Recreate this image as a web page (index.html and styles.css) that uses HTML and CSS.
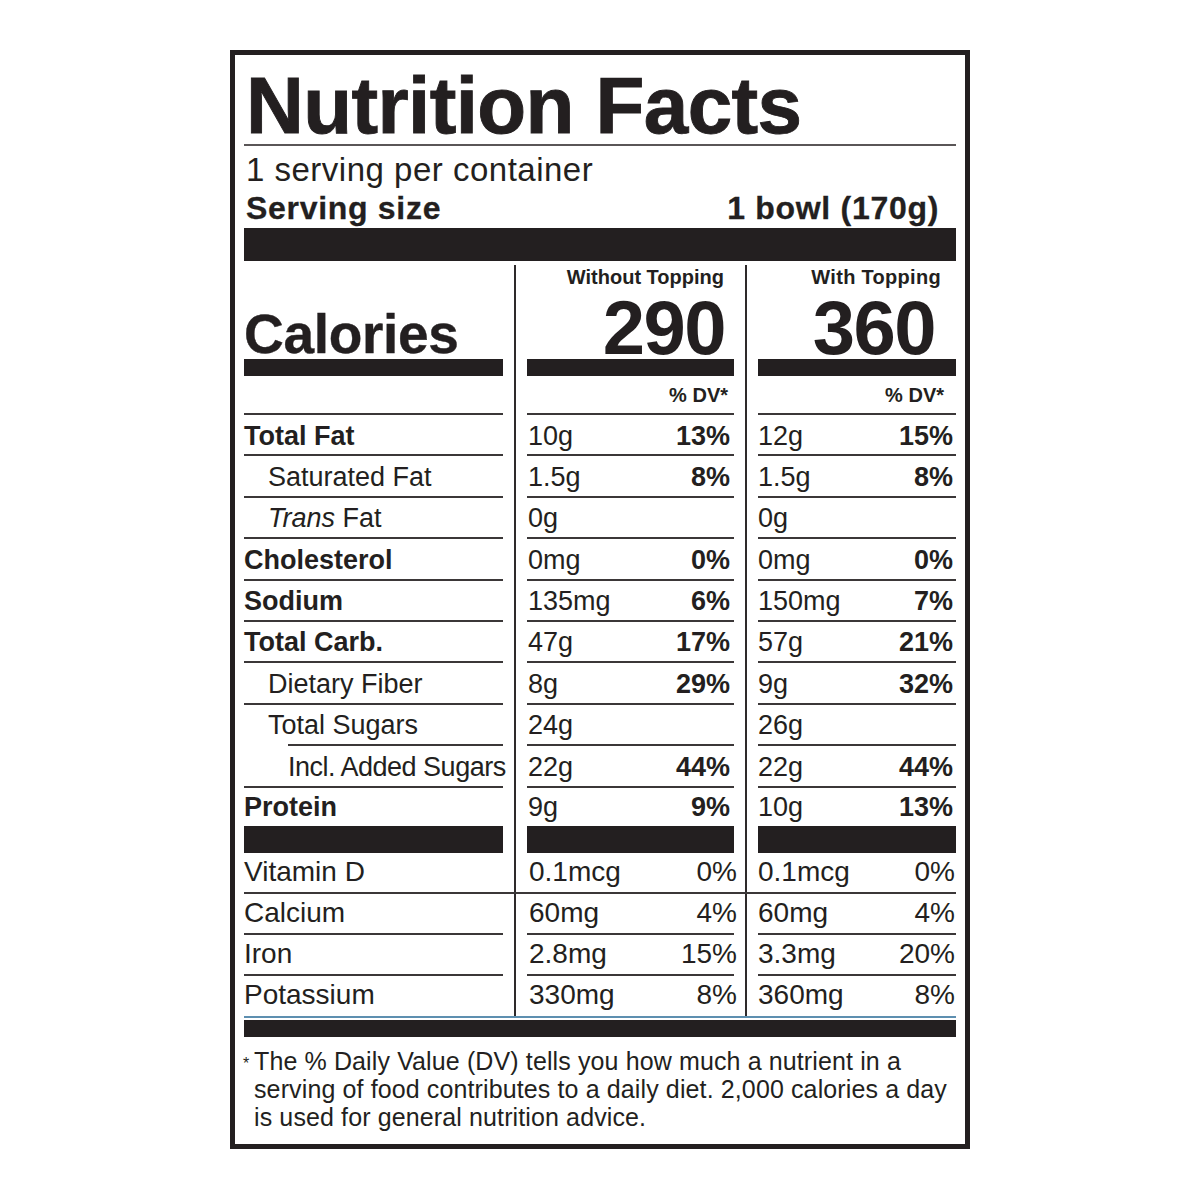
FILE: index.html
```html
<!DOCTYPE html>
<html lang="en">
<head>
<meta charset="utf-8">
<title>Nutrition Facts</title>
<link rel="stylesheet" href="styles.css">
</head>
<body>
<div class="label">
  <div class="title">Nutrition Facts</div>
  <div class="servings">1 serving per container</div>
  <div class="size"><span>Serving size</span><span>1 bowl (170g)</span></div>
  <div class="bigbar"></div>

  <div class="table">
    <div class="row cal">
      <div class="cc c1"><div class="cal-word">Calories</div><div class="cbar"></div></div>
      <div class="sep"></div>
      <div class="cc c2"><div class="cal-sub">Without Topping</div><div class="cal-num">290</div><div class="cbar"></div></div>
      <div class="sep"></div>
      <div class="cc c3"><div class="cal-sub">With Topping</div><div class="cal-num">360</div><div class="cbar"></div></div>
    </div>

    <div class="row dv">
      <div class="dc"></div>
      <div class="sep"></div>
      <div class="dc d2">% DV*</div>
      <div class="sep"></div>
      <div class="dc d3">% DV*</div>
    </div>

    <div class="row nr">
      <div class="cl b">Total Fat</div><div class="sep"></div>
      <div class="cv v2"><span>10g</span><b>13%</b></div><div class="sep"></div>
      <div class="cv v3"><span>12g</span><b>15%</b></div>
    </div>
    <div class="row nr">
      <div class="cl ind">Saturated Fat</div><div class="sep"></div>
      <div class="cv v2"><span>1.5g</span><b>8%</b></div><div class="sep"></div>
      <div class="cv v3"><span>1.5g</span><b>8%</b></div>
    </div>
    <div class="row nr">
      <div class="cl ind"><i>Trans</i> Fat</div><div class="sep"></div>
      <div class="cv v2"><span>0g</span></div><div class="sep"></div>
      <div class="cv v3"><span>0g</span></div>
    </div>
    <div class="row nr">
      <div class="cl b">Cholesterol</div><div class="sep"></div>
      <div class="cv v2"><span>0mg</span><b>0%</b></div><div class="sep"></div>
      <div class="cv v3"><span>0mg</span><b>0%</b></div>
    </div>
    <div class="row nr">
      <div class="cl b">Sodium</div><div class="sep"></div>
      <div class="cv v2"><span>135mg</span><b>6%</b></div><div class="sep"></div>
      <div class="cv v3"><span>150mg</span><b>7%</b></div>
    </div>
    <div class="row nr">
      <div class="cl b">Total Carb.</div><div class="sep"></div>
      <div class="cv v2"><span>47g</span><b>17%</b></div><div class="sep"></div>
      <div class="cv v3"><span>57g</span><b>21%</b></div>
    </div>
    <div class="row nr">
      <div class="cl ind">Dietary Fiber</div><div class="sep"></div>
      <div class="cv v2"><span>8g</span><b>29%</b></div><div class="sep"></div>
      <div class="cv v3"><span>9g</span><b>32%</b></div>
    </div>
    <div class="row nr">
      <div class="cl short">Total Sugars</div><div class="sep"></div>
      <div class="cv v2"><span>24g</span></div><div class="sep"></div>
      <div class="cv v3"><span>26g</span></div>
    </div>
    <div class="row nr">
      <div class="cl ind2">Incl. Added Sugars</div><div class="sep"></div>
      <div class="cv v2"><span>22g</span><b>44%</b></div><div class="sep"></div>
      <div class="cv v3"><span>22g</span><b>44%</b></div>
    </div>
    <div class="row pr">
      <div class="cl b">Protein</div><div class="sep"></div>
      <div class="cv v2"><span>9g</span><b>9%</b></div><div class="sep"></div>
      <div class="cv v3"><span>10g</span><b>13%</b></div>
    </div>
    <div class="row barrow">
      <div class="blk"></div><div class="sep"></div>
      <div class="blk"></div><div class="sep"></div>
      <div class="blk"></div>
    </div>

    <div class="row vr vd">
      <div class="cl">Vitamin D</div><div class="sep"></div>
      <div class="cv w2"><span>0.1mcg</span><span class="pct">0%</span></div><div class="sep"></div>
      <div class="cv w3"><span>0.1mcg</span><span>0%</span></div>
    </div>
    <div class="row vr ln">
      <div class="cl">Calcium</div><div class="sep"></div>
      <div class="cv w2"><span>60mg</span><span class="pct">4%</span></div><div class="sep"></div>
      <div class="cv w3"><span>60mg</span><span>4%</span></div>
    </div>
    <div class="row vr ln">
      <div class="cl">Iron</div><div class="sep"></div>
      <div class="cv w2"><span>2.8mg</span><span class="pct">15%</span></div><div class="sep"></div>
      <div class="cv w3"><span>3.3mg</span><span>20%</span></div>
    </div>
    <div class="row vr vk">
      <div class="cl">Potassium</div><div class="sep"></div>
      <div class="cv w2"><span>330mg</span><span class="pct">8%</span></div><div class="sep"></div>
      <div class="cv w3"><span>360mg</span><span>8%</span></div>
    </div>
  </div>

  <div class="botbar"></div>

  <div class="foot">
    <span class="ast">*</span>
    <p class="note">The % Daily Value (DV) tells you how much a nutrient in a<br>serving of food contributes to a daily diet. 2,000 calories a day<br>is used for general nutrition advice.</p>
  </div>
</div>
</body>
</html>
```

FILE: styles.css
```css
body {
  margin: 0;
  background: #ffffff;
  font-family: "Liberation Sans", Arial, sans-serif;
  color: #231f20;
}

.label {
  margin: 50px 0 0 230px;
  width: 740px;
  height: 1099px;
  box-sizing: border-box;
  border: 5px solid #231f20;
  padding: 0 9px;
}

.title {
  font-weight: 700;
  font-size: 80px;
  line-height: 76px;
  letter-spacing: -0.6px;
  padding-top: 13px;
  padding-left: 2px;
  border-bottom: 2px solid #5a5657;
  -webkit-text-stroke: 0.9px #231f20;
  white-space: nowrap;
}

.servings {
  font-size: 33px;
  line-height: 36px;
  letter-spacing: 0.5px;
  margin-top: 6px;
  padding-left: 2px;
  white-space: nowrap;
}

.size {
  display: flex;
  justify-content: space-between;
  font-weight: 700;
  font-size: 32px;
  line-height: 34px;
  letter-spacing: 0.7px;
  margin-top: 3px;
  padding-left: 2px;
  padding-right: 17px;
  white-space: nowrap;
  -webkit-text-stroke: 0.3px #231f20;
}

.bigbar {
  height: 33px;
  margin-top: 3px;
  background: #231f20;
}

.table {
  margin-top: 4px;
}

.row {
  display: grid;
  grid-template-columns: 259px 24px 207px 24px 198px;
  box-sizing: border-box;
}

.sep {
  margin-left: 11px;
  border-left: 2px solid #2e2a2b;
}

/* Calories header */
.cal {
  height: 111px;
}

.cc {
  display: flex;
  flex-direction: column;
  justify-content: flex-end;
  align-items: flex-end;
}

.c1 {
  align-items: stretch;
}

.cbar {
  align-self: stretch;
  height: 17px;
  background: #231f20;
}

.cal-word {
  font-weight: 700;
  font-size: 55px;
  line-height: 50px;
  letter-spacing: -0.3px;
  -webkit-text-stroke: 0.4px #231f20;
}

.cal-sub {
  font-weight: 700;
  font-size: 20px;
  line-height: 22px;
  margin-bottom: auto;
  padding-top: 1px;
  white-space: nowrap;
}

.cal-num {
  font-weight: 700;
  font-size: 76px;
  line-height: 63px;
  letter-spacing: -1.5px;
}

.c2 .cal-sub { padding-right: 10px; }
.c2 .cal-num { padding-right: 9px; }
.c3 .cal-sub { padding-right: 15px; letter-spacing: 0.3px; }
.c3 .cal-num { padding-right: 21px; }

/* % DV row */
.dv {
  height: 39px;
}

.dc {
  border-bottom: 2px solid #3b3738;
  font-weight: 700;
  font-size: 20px;
  line-height: 24px;
  padding-top: 7px;
  text-align: right;
  box-sizing: border-box;
}

.d2 { padding-right: 6px; }
.d3 { padding-right: 12px; }

/* nutrient rows */
.nr {
  height: 41.4px;
}

.nr .cl,
.nr .cv,
.ln .cl,
.ln .cv {
  border-bottom: 2px solid #3b3738;
}

.cl {
  font-size: 27px;
  line-height: 27px;
  padding-top: 7.5px;
  box-sizing: border-box;
  white-space: nowrap;
}

.cl.b {
  font-weight: 700;
}

.ind {
  padding-left: 24px;
}

.ind2 {
  padding-left: 44px;
  letter-spacing: -0.5px;
}

.short {
  margin-left: 44px;
  text-indent: -20px;
}

.cv {
  display: flex;
  justify-content: space-between;
  font-size: 27px;
  line-height: 27px;
  padding-top: 7.5px;
  box-sizing: border-box;
  white-space: nowrap;
}

.cv b {
  font-weight: 700;
}

.v2 {
  padding-left: 1px;
  padding-right: 4px;
}

.v3 {
  padding-left: 0;
  padding-right: 3px;
}

.pr {
  height: 38.4px;
}

.pr .cl,
.pr .cv {
  padding-top: 6.5px;
}

.barrow {
  height: 27px;
}

.blk {
  background: #231f20;
}

/* vitamins & minerals */
.vr {
  height: 41px;
}

.vr .cl,
.vr .cv {
  font-size: 28px;
  line-height: 28px;
  padding-top: 5.5px;
}

.vd {
  border-bottom: 2px solid #3b3738;
}

.vk {
  height: 42px;
  border-bottom: 2px solid #5d8fb0;
}

.w2 {
  padding-left: 2px;
  padding-right: 0;
}

.w2 .pct {
  margin-right: -3px;
}

.w3 {
  padding-left: 0;
  padding-right: 1px;
}

.botbar {
  height: 17px;
  margin-top: 2px;
  background: #231f20;
}

.foot {
  display: flex;
  margin-top: 10px;
}

.ast {
  width: 11px;
  margin-left: -1px;
  font-size: 16px;
  line-height: 16px;
  padding-top: 9px;
}

.note {
  margin: 0;
  font-size: 25px;
  line-height: 28px;
  letter-spacing: 0.12px;
  white-space: nowrap;
}
```
